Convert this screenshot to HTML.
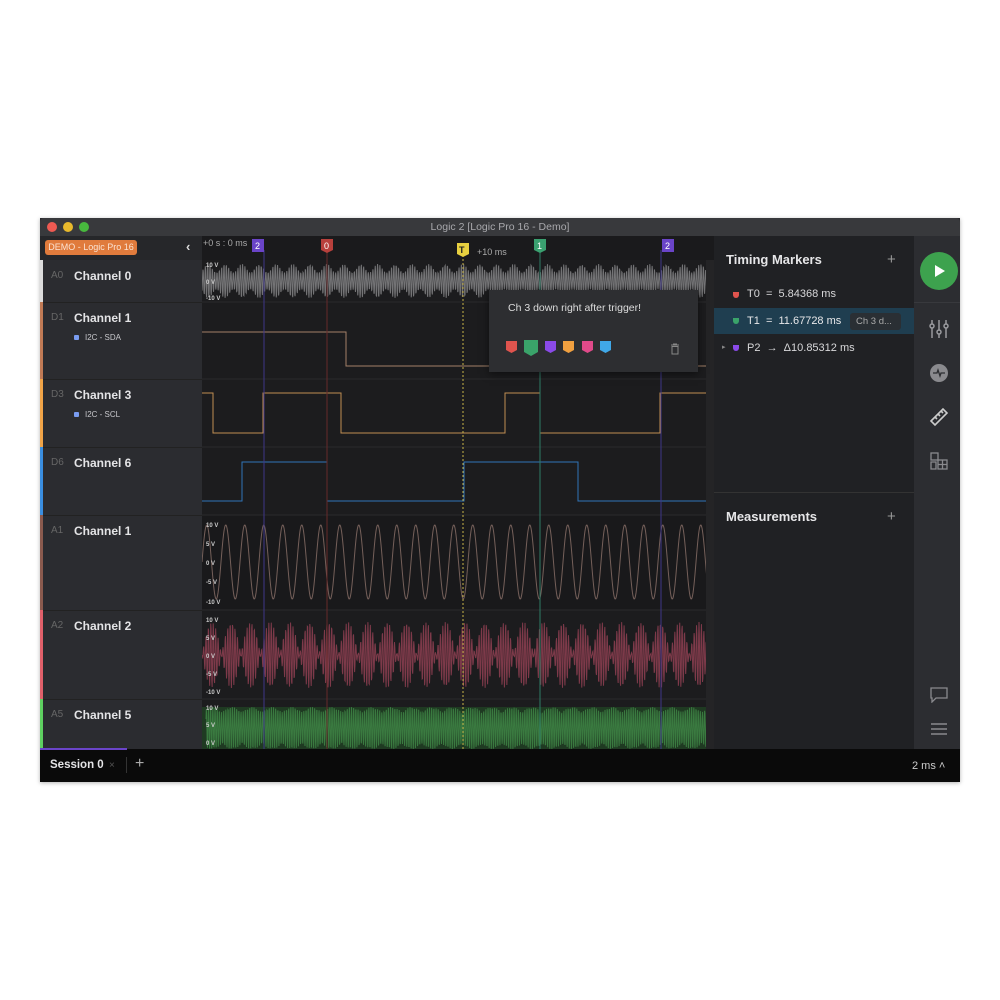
<!DOCTYPE html>
<html><head><meta charset="utf-8"><style>
*{margin:0;padding:0;box-sizing:border-box}
body{width:1000px;height:1000px;background:#fff;font-family:"Liberation Sans",sans-serif;position:relative;overflow:hidden}
.a{position:absolute}
.t{color:#e4e4e6;font-size:12px;font-weight:bold}
.s{color:#666;font-size:10px}
.sub{color:#c8c8cc;font-size:8px}
.sub i{display:inline-block;width:5px;height:5px;background:#7a9cf0;border-radius:1px;margin-right:6px}
</style></head><body>
<div class="a" style="left:40px;top:218px;width:920px;height:564px;background:#2a2b2e;box-shadow:0 1px 4px rgba(0,0,0,.3)"></div>
<div class="a" style="left:40px;top:218px;width:920px;height:18px;background:#38393c;border-radius:4px 4px 0 0"></div>
<div class="a" style="left:47px;top:222px;width:10px;height:10px;border-radius:5px;background:#ee5a52"></div>
<div class="a" style="left:63px;top:222px;width:10px;height:10px;border-radius:5px;background:#e8b92c"></div>
<div class="a" style="left:79px;top:222px;width:10px;height:10px;border-radius:5px;background:#48b83e"></div>
<div class="a" style="left:0;width:1000px;top:221px;text-align:center;color:#a8a8ac;font-size:10.5px">Logic 2 [Logic Pro 16 - Demo]</div>
<div class="a" style="left:40px;top:236px;width:162px;height:513px;background:#2b2c30"></div>
<div class="a" style="left:40px;top:236px;width:162px;height:24px;background:#26272a"></div>
<div class="a" style="left:45px;top:240px;width:92px;height:15px;background:#e07b3c;border-radius:3px;color:#fbe3d2;font-size:9px;line-height:15px;text-align:center">DEMO - Logic Pro 16</div>
<div class="a" style="left:186px;top:239px;color:#ddd;font-size:13px;font-weight:bold">‹</div>
<div class="a" style="left:40px;top:260px;width:3px;height:42px;background:#ddd"></div>
<div class="a" style="left:40px;top:302px;width:3px;height:77px;background:#c07a55"></div>
<div class="a" style="left:40px;top:379px;width:3px;height:68px;background:#f0a448"></div>
<div class="a" style="left:40px;top:447px;width:3px;height:68px;background:#3a8ee0"></div>
<div class="a" style="left:40px;top:515px;width:3px;height:95px;background:#8a5a4e"></div>
<div class="a" style="left:40px;top:610px;width:3px;height:89px;background:#e0606a"></div>
<div class="a" style="left:40px;top:699px;width:3px;height:50px;background:#5ed060"></div>
<div class="a" style="left:43px;top:302px;width:159px;height:1px;background:#222"></div>
<div class="a" style="left:43px;top:379px;width:159px;height:1px;background:#222"></div>
<div class="a" style="left:43px;top:447px;width:159px;height:1px;background:#222"></div>
<div class="a" style="left:43px;top:515px;width:159px;height:1px;background:#222"></div>
<div class="a" style="left:43px;top:610px;width:159px;height:1px;background:#222"></div>
<div class="a" style="left:43px;top:699px;width:159px;height:1px;background:#222"></div>
<div class="a s" style="left:51px;top:270px">A0</div><div class="a t" style="left:74px;top:269px">Channel 0</div>
<div class="a s" style="left:51px;top:312px">D1</div><div class="a t" style="left:74px;top:311px">Channel 1</div>
<div class="a sub" style="left:74px;top:333px"><i></i>I2C - SDA</div>
<div class="a s" style="left:51px;top:389px">D3</div><div class="a t" style="left:74px;top:388px">Channel 3</div>
<div class="a sub" style="left:74px;top:410px"><i></i>I2C - SCL</div>
<div class="a s" style="left:51px;top:457px">D6</div><div class="a t" style="left:74px;top:456px">Channel 6</div>
<div class="a s" style="left:51px;top:525px">A1</div><div class="a t" style="left:74px;top:524px">Channel 1</div>
<div class="a s" style="left:51px;top:620px">A2</div><div class="a t" style="left:74px;top:619px">Channel 2</div>
<div class="a s" style="left:51px;top:709px">A5</div><div class="a t" style="left:74px;top:708px">Channel 5</div>
<svg class="a" style="left:202px;top:236px" width="512" height="513" viewBox="202 236 512 513">
<rect x="202" y="236" width="512" height="513" fill="#1c1c1e"/>
<rect x="202" y="236" width="512" height="24" fill="#1a1a1c"/>
<rect x="202" y="515" width="512" height="95" fill="#19191b"/>
<g stroke="#2a2a2c"><line x1="202" y1="302" x2="714" y2="302"/><line x1="202" y1="379" x2="714" y2="379"/><line x1="202" y1="447" x2="714" y2="447"/><line x1="202" y1="515" x2="714" y2="515"/><line x1="202" y1="610" x2="714" y2="610"/><line x1="202" y1="699" x2="714" y2="699"/></g>
<rect x="202" y="707" width="512" height="42" fill="#1f3a22"/>
<path id="a0" stroke="#747476" stroke-width="1" fill="none"/>
<path d="M202 332H346V366H714" stroke="#a38068" fill="none"/>
<path d="M202 393H213V433H263V393H341V433H505V393H540V433H660V393H714" stroke="#c08e52" fill="none"/>
<path d="M202 501H242V462H327V501H464V462H578V501H714" stroke="#2f74b8" fill="none"/>
<path id="a1" stroke="#75605a" fill="none"/>
<path id="a2" stroke="#7e3a4a" stroke-width="1" fill="none"/>
<path id="a5" stroke="#3a7a40" stroke-width="1" fill="none"/>
<g stroke-width="1"><line x1="264" y1="250" x2="264" y2="749" stroke="#3e3688"/><line x1="661" y1="250" x2="661" y2="749" stroke="#3e3688"/><line x1="327" y1="250" x2="327" y2="749" stroke="#662a2a"/><line x1="540" y1="250" x2="540" y2="749" stroke="#2e7c66"/><line x1="463" y1="255" x2="463" y2="749" stroke="#c8b448" stroke-dasharray="2 2"/></g>
<g font-family="Liberation Sans" font-size="6" font-weight="bold" fill="#ccc">
<text x="206" y="267">10 V</text><text x="206" y="284">0 V</text><text x="206" y="300">-10 V</text>
<text x="206" y="527">10 V</text><text x="206" y="546">5 V</text><text x="206" y="565">0 V</text><text x="206" y="584">-5 V</text><text x="206" y="604">-10 V</text>
<text x="206" y="622">10 V</text><text x="206" y="640">5 V</text><text x="206" y="658">0 V</text><text x="206" y="676">-5 V</text><text x="206" y="694">-10 V</text>
<text x="206" y="710">10 V</text><text x="206" y="727">5 V</text><text x="206" y="745">0 V</text></g>
<text x="203" y="246" font-family="Liberation Sans" font-size="9" fill="#aaa">+0 s : 0 ms</text>
<text x="477" y="255" font-family="Liberation Sans" font-size="9" fill="#aaa">+10 ms</text>
<rect x="252" y="239" width="12" height="13" fill="#6a44c8"/><text x="255" y="249" font-size="9" fill="#fff" font-family="Liberation Sans">2</text>
<rect x="662" y="239" width="12" height="13" fill="#6a44c8"/><text x="665" y="249" font-size="9" fill="#fff" font-family="Liberation Sans">2</text>
<path d="M321 239h12v11l-6 3l-6-3z" fill="#b8403c"/><text x="324" y="249" font-size="9" fill="#fff" font-family="Liberation Sans">0</text>
<path d="M534 239h12v11l-6 3l-6-3z" fill="#3aa070"/><text x="537" y="249" font-size="9" fill="#fff" font-family="Liberation Sans">1</text>
<path d="M457 243h12v11l-6 3l-6-3z" fill="#e8d040"/><text x="459" y="253" font-size="9" fill="#222" font-weight="bold" font-family="Liberation Sans">T</text>
<rect x="706" y="260" width="8" height="489" fill="#242426"/>
</svg>
<div class="a" style="left:489px;top:290px;width:209px;height:82px;background:#2d2e31;box-shadow:0 2px 8px rgba(0,0,0,.5)"></div>
<div class="a" style="left:508px;top:302px;color:#ddd;font-size:10.5px">Ch 3 down right after trigger!</div>
<svg class="a" style="left:505px;top:340px" width="110" height="18">
<path d="M1 1h11v9l-5.5 3l-5.5-3z" fill="#e0544e"/>
<path d="M19 0h14v12l-7 4l-7-4z" fill="#3aa36a"/>
<path d="M40 1h11v9l-5.5 3l-5.5-3z" fill="#8a4ae8"/>
<path d="M58 1h11v9l-5.5 3l-5.5-3z" fill="#f0a040"/>
<path d="M77 1h11v9l-5.5 3l-5.5-3z" fill="#e04a8a"/>
<path d="M95 1h11v9l-5.5 3l-5.5-3z" fill="#40a8e8"/>
</svg>
<svg class="a" style="left:670px;top:343px" width="10" height="12"><path d="M1 2h8M3.5 2V1h3v1M2 3.5h6v7.5h-6z" stroke="#888" fill="none"/></svg>
<div class="a" style="left:714px;top:236px;width:200px;height:513px;background:#202124"></div>
<div class="a" style="left:714px;top:492px;width:200px;height:1px;background:#333"></div>
<div class="a" style="left:726px;top:252px;color:#e6e6e8;font-size:13px;font-weight:bold">Timing Markers</div>
<div class="a" style="left:887px;top:251px;color:#999;font-size:15px">+</div>
<div class="a" style="left:726px;top:509px;color:#e6e6e8;font-size:13px;font-weight:bold">Measurements</div>
<div class="a" style="left:887px;top:508px;color:#999;font-size:15px">+</div>
<div class="a" style="left:714px;top:308px;width:200px;height:26px;background:#1f3e50"></div>
<div class="a" style="left:733px;top:292px;width:6px;height:6px;border-radius:0 0 3px 3px;background:#e0544e"></div>
<div class="a" style="left:747px;top:288px;color:#d8d8da;font-size:11px">T0 &nbsp;= &nbsp;5.84368 ms</div>
<div class="a" style="left:733px;top:318px;width:6px;height:6px;border-radius:0 0 3px 3px;background:#3aa36a"></div>
<div class="a" style="left:747px;top:315px;color:#e8e8ea;font-size:11px">T1 &nbsp;= &nbsp;11.67728 ms</div>
<div class="a" style="left:850px;top:313px;width:51px;height:17px;background:#2a2f34;border-radius:3px;color:#aaa;font-size:9.5px;line-height:17px;padding-left:6px">Ch 3 d...</div>
<div class="a" style="left:722px;top:343px;color:#888;font-size:7px">▸</div>
<div class="a" style="left:733px;top:345px;width:6px;height:6px;border-radius:0 0 3px 3px;background:#8a4ae8"></div>
<div class="a" style="left:747px;top:342px;color:#d8d8da;font-size:11px">P2 &nbsp;→ &nbsp;Δ10.85312 ms</div>
<div class="a" style="left:914px;top:236px;width:46px;height:513px;background:#2c2d31"></div>
<div class="a" style="left:914px;top:302px;width:46px;height:1px;background:#38393d"></div>
<div class="a" style="left:920px;top:252px;width:38px;height:38px;border-radius:19px;background:#3da24e"></div>
<svg class="a" style="left:934px;top:264px" width="12" height="14"><path d="M1 1L11 7L1 13z" fill="#fff"/></svg>
<svg class="a" style="left:928px;top:318px" width="22" height="22" stroke="#9a9a9e" stroke-width="1.5" fill="none"><path d="M4 2v18M11 2v18M18 2v18"/><circle cx="4" cy="8" r="2" fill="#2c2d31"/><circle cx="11" cy="14" r="2" fill="#2c2d31"/><circle cx="18" cy="8" r="2" fill="#2c2d31"/></svg>
<div class="a" style="left:930px;top:364px;width:18px;height:18px;border-radius:9px;background:#8a8a8e"></div>
<svg class="a" style="left:930px;top:364px" width="18" height="18"><path d="M3 9h4l1-3l2 6l1-3h4" stroke="#2c2d31" stroke-width="1.3" fill="none"/></svg>
<svg class="a" style="left:929px;top:407px" width="20" height="20" stroke="#ccc" stroke-width="1.6" fill="none"><path d="M2 14L14 2L18 6L6 18z"/><path d="M6 10l2 2M9 7l2 2M12 4l2 2"/></svg>
<svg class="a" style="left:930px;top:452px" width="18" height="18" stroke="#8a8a8e" stroke-width="1.3" fill="none"><rect x="1" y="1" width="7" height="7"/><rect x="8" y="8" width="9" height="9"/><path d="M12.5 8v9M8 12.5h9M1 10h5v7H1z"/></svg>
<svg class="a" style="left:930px;top:687px" width="18" height="16" stroke="#8a8a8e" stroke-width="1.3" fill="none"><path d="M1 1h16v10H6l-4 4V11H1z"/></svg>
<svg class="a" style="left:930px;top:722px" width="18" height="14" stroke="#8a8a8e" stroke-width="1.5"><path d="M1 2h16M1 7h16M1 12h16"/></svg>
<div class="a" style="left:40px;top:749px;width:920px;height:33px;background:#0a0a0a"></div>
<div class="a" style="left:40px;top:748px;width:87px;height:2px;background:#6a44c8"></div>
<div class="a" style="left:50px;top:759px;color:#e4e4e6;font-size:11.5px;font-weight:bold">Session 0</div>
<div class="a" style="left:109px;top:760px;color:#555;font-size:10px">×</div>
<div class="a" style="left:126px;top:757px;width:1px;height:16px;background:#333"></div>
<div class="a" style="left:135px;top:755px;color:#aaa;font-size:16px">+</div>
<div class="a" style="left:912px;top:760px;color:#ccc;font-size:11px">2 ms ˄</div>
<script>
function set(id,f,x0,x1,st){let d='M'+x0+' '+f(x0).toFixed(1);for(let x=x0+st;x<=x1;x+=st)d+='L'+x.toFixed(2)+' '+f(x).toFixed(1);document.getElementById(id).setAttribute('d',d);}
set('a1',x=>562-37*Math.sin((x-202)*2*Math.PI/19),202,714,0.5);
set('a2',x=>{let e=Math.abs(Math.sin((x-202)*Math.PI/19.5));return 655-33*e*Math.sin(x*2.6)},202,714,0.35);
set('a5',x=>{let e=0.75+0.25*Math.abs(Math.sin((x-202)*Math.PI/20));return 728-21*e*Math.sin(x*2.9)},206,714,0.3);
set('a0',x=>281-17*(0.75+0.25*Math.sin(x*0.37))*Math.sin(x*2.7),202,714,0.33);
</script>
</body></html>
